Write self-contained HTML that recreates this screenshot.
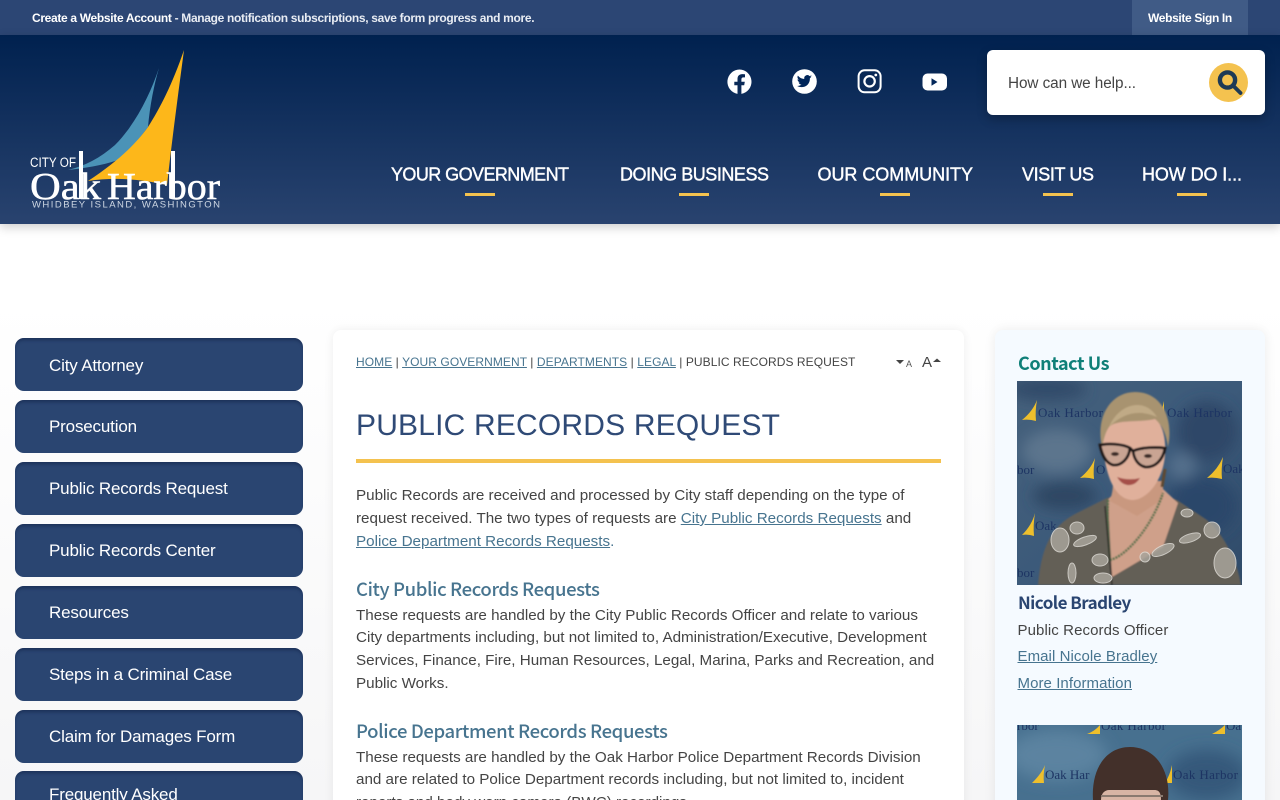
<!DOCTYPE html>
<html lang="en"><head><meta charset="utf-8"><title>Public Records Request</title>
<style>
html,body{margin:0;padding:0;width:1280px;height:800px;overflow:hidden;background:#fff;font-family:"Liberation Sans",sans-serif}
#p{position:relative;width:1280px;height:800px;overflow:hidden;background:linear-gradient(#fff 0,#fff 300px,#f6f6f7 800px)}
.t{position:absolute;white-space:nowrap;line-height:20px}
a{color:#47748f;text-decoration:underline}
#top{position:absolute;left:0;top:0;width:1280px;height:35px;background:#2c4674}
#sign{position:absolute;left:1132px;top:0;width:116px;height:35px;background:#405b86}
#hd{position:absolute;left:0;top:35px;width:1280px;height:189px;background:linear-gradient(#00214f,#29436f);box-shadow:0 3px 10px rgba(0,0,0,.2)}
.u{position:absolute;top:193px;height:3px;width:30px;background:#f4c24f}
#search{position:absolute;left:987px;top:50px;width:278px;height:65px;background:#fff;border-radius:6px;box-shadow:0 4px 10px rgba(0,0,0,.25)}
.b{position:absolute;left:15px;width:288px;height:53px;border-radius:9px;background:#2a4571;box-shadow:inset 0 3px 3px -1px rgba(10,25,60,.45)}
.b span{position:absolute;left:34px;top:17px;line-height:20px;color:#fff;font-size:17px;letter-spacing:-.17px;white-space:nowrap}
#main{position:absolute;left:333px;top:330px;width:631px;height:520px;background:#fff;border-radius:8px;box-shadow:0 0 10px rgba(0,0,0,.07)}
#side{position:absolute;left:995px;top:330px;width:270px;height:520px;background:#f5faff;border-radius:8px;box-shadow:0 0 12px rgba(0,0,0,.08)}
.p{color:#444;font-size:15.2px}
.h{font-family:"Noto Sans CJK SC","Liberation Sans",sans-serif;font-weight:500;font-size:18.5px;letter-spacing:-.37px;color:#47748f;line-height:24px}
.bc{font-size:12px;color:#444;top:352px;letter-spacing:.07px}
</style></head><body><div id="p">
<div id="top"></div><div id="sign"></div>
<div class="t" style="left:32px;top:8px;color:#fff;font-size:12px;letter-spacing:-.325px"><b>Create a Website Account</b> <b style="color:#e8ecf3">- Manage notification subscriptions, save form progress and more.</b></div>
<div class="t" style="left:1148px;top:8px;color:#fff;font-size:12px;font-weight:bold;letter-spacing:-.35px">Website Sign In</div>
<div id="hd"></div>

<svg style="position:absolute;left:0;top:35px" width="240" height="189" viewBox="0 35 240 189">
<path d="M159 68C150 95 135 125 115 145C100 158 85 166 68 170C85 168 100 166 118 160C130 150 140 138 148 127C150 105 154 85 159 68Z" fill="#4b93b7"/>
<path d="M184 50C172 85 160 108 148 127C135 145 117 162 88 181C115 177 140 179 167 185C172 140 178 95 184 50Z" fill="#fdb71a"/>
<rect x="79" y="151" width="4" height="48" fill="#fff"/><rect x="171" y="151" width="4" height="48" fill="#fff"/>
<text x="30" y="167" font-family="Liberation Sans" font-size="13.500" fill="#fff" textLength="46" lengthAdjust="spacingAndGlyphs">CITY OF</text>
<g font-family="Liberation Serif" font-size="38" fill="#fff" stroke="#fff" stroke-width=".5">
<text x="30" y="199" textLength="71" lengthAdjust="spacingAndGlyphs">Oak</text>
<text x="107" y="199" textLength="113" lengthAdjust="spacingAndGlyphs">Harbor</text></g>
<text x="32" y="207.500" font-family="Liberation Sans" font-size="9.500" fill="#cfd8e4" textLength="188">WHIDBEY ISLAND, WASHINGTON</text>
</svg>

<svg style="position:absolute;left:725px;top:66px" width="230" height="32" viewBox="725 66 230 32">
<path d="M739.500 69.500a12.300 12.300 0 0 0-2 24.400v-8.600h-3.200v-3.600h3.200v-2.800c0-3.100 1.900-4.800 4.700-4.800 1.400 0 2.800.2 2.800.2v3.100h-1.600c-1.500 0-2 1-2 2v2.300h3.400l-.6 3.600h-2.800v8.600a12.300 12.300 0 0 0-1.900-24.400z" fill="#fff"/>
<circle cx="804.500" cy="81.500" r="12.300" fill="#fff"/>
<path d="M812 76.500c-.6.300-1.200.4-1.800.5.700-.4 1.100-1 1.400-1.700-.6.400-1.300.6-2 .8a3.100 3.100 0 0 0-5.300 2.800c-2.600-.1-4.900-1.400-6.400-3.300-.8 1.400-.4 3.200 1 4.100-.5 0-1-.1-1.400-.4 0 1.500 1.100 2.800 2.500 3.100-.5.100-.9.100-1.400.1.400 1.200 1.500 2.100 2.900 2.100a6.300 6.300 0 0 1-4.600 1.300c5.700 3.300 13.300-.1 13-7.700.6-.5 1.200-1.100 1.600-1.700z" fill="#00265a"/>
<rect x="858.600" y="70.300" width="22" height="22" rx="6" fill="none" stroke="#fff" stroke-width="2"/>
<circle cx="869.600" cy="81.300" r="5.200" fill="none" stroke="#fff" stroke-width="2.200"/><circle cx="875.800" cy="75" r="1.400" fill="#fff"/>
<rect x="922.500" y="73.500" width="24.500" height="17" rx="5" fill="#fff"/><path d="M931.500 78.300v7.400l6-3.700z" fill="#03275a"/>
</svg>

<div id="search"></div>
<div class="t" style="left:1008px;top:74px;font-size:15.300px;color:#444;letter-spacing:-.07px">How can we help...</div>
<svg style="position:absolute;left:1205px;top:60px" width="46" height="46" viewBox="0 0 46 46">
<ellipse cx="23.500" cy="22.500" rx="19.500" ry="19.500" fill="#f4c24f"/>
<circle cx="22.500" cy="20" r="7.600" fill="none" stroke="#1e3a55" stroke-width="4.400"/>
<path d="M29 26.500l6.500 6.500" stroke="#1e3a55" stroke-width="3.800" stroke-linecap="round"/></svg>

<svg style="position:absolute;left:0;top:0" width="1280" height="460" viewBox="0 0 1280 460">
<g font-family="Liberation Sans" font-size="18" fill="#fff" stroke="#fff" stroke-width=".4">
<text x="391" y="180.500" textLength="178">YOUR GOVERNMENT</text>
<text x="620" y="180.500" textLength="149">DOING BUSINESS</text>
<text x="817.500" y="180.500" textLength="155.500">OUR COMMUNITY</text>
<text x="1022" y="180.500" textLength="72">VISIT US</text>
<text x="1142" y="180.500" textLength="100">HOW DO I...</text></g>
</svg>
<div class="u" style="left:465px"></div><div class="u" style="left:679px"></div><div class="u" style="left:880px"></div><div class="u" style="left:1043px"></div><div class="u" style="left:1177px"></div>

<div class="b" style="top:338px"><span style="top:17.500px">City Attorney</span></div>
<div class="b" style="top:400px"><span>Prosecution</span></div>
<div class="b" style="top:462px"><span>Public Records Request</span></div>
<div class="b" style="top:524px"><span>Public Records Center</span></div>
<div class="b" style="top:586px"><span>Resources</span></div>
<div class="b" style="top:648px"><span>Steps in a Criminal Case</span></div>
<div class="b" style="top:710px"><span>Claim for Damages Form</span></div>
<div class="b" style="top:771px;height:60px"><span style="top:14px">Frequently Asked</span></div>

<div id="main"></div>
<div class="t bc" style="left:356px"><a href="#">HOME</a> | <a href="#">YOUR GOVERNMENT</a> | <a href="#">DEPARTMENTS</a> | <a href="#">LEGAL</a> | PUBLIC RECORDS REQUEST</div>
<svg style="position:absolute;left:894px;top:352px" width="50" height="20" viewBox="0 0 50 20"><path d="M2 8h8l-4 4z" fill="#444"/><path d="M39 10h8l-4-3.500z" fill="#444"/>
<text x="12" y="15" font-family="Liberation Sans" font-size="9" fill="#555">A</text><text x="28" y="15" font-family="Liberation Sans" font-size="15" fill="#444">A</text></svg>
<svg style="position:absolute;left:350px;top:400px" width="450" height="50" viewBox="350 400 450 50"><text x="356" y="435" font-family="Liberation Sans" font-size="30" fill="#2f4a76" textLength="424">PUBLIC RECORDS REQUEST</text></svg>
<div style="position:absolute;left:356px;top:459px;width:585px;height:4px;background:#f4c24f"></div>

<div class="t p" style="left:356px;top:486px">Public Records are received and processed by City staff depending on the type of</div>
<div class="t p" style="left:356px;top:509px">request received. The two types of requests are <a href="#">City Public Records Requests</a> and</div>
<div class="t p" style="left:356px;top:532px"><a href="#">Police Department Records Requests</a><span style="color:#47748f">.</span></div>

<div class="t h" style="left:356px;top:577px">City Public Records Requests</div>
<div class="t p" style="left:356px;top:606px">These requests are handled by the City Public Records Officer and relate to various</div>
<div class="t p" style="left:356px;top:628px">City departments including, but not limited to, Administration/Executive, Development</div>
<div class="t p" style="left:356px;top:651px">Services, Finance, Fire, Human Resources, Legal, Marina, Parks and Recreation, and</div>
<div class="t p" style="left:356px;top:674px">Public Works.</div>

<div class="t h" style="left:356px;top:719px">Police Department Records Requests</div>
<div class="t p" style="left:356px;top:748px">These requests are handled by the Oak Harbor Police Department Records Division</div>
<div class="t p" style="left:356px;top:770px">and are related to Police Department records including, but not limited to, incident</div>
<div class="t p" style="left:356px;top:793px">reports and body worn camera (BWC) recordings.</div>

<div id="side"></div>
<div class="t h" style="left:1018px;top:351px;color:#0f7f78;font-weight:700;font-size:18px;letter-spacing:-.45px">Contact Us</div>

<svg style="position:absolute;left:1017px;top:381px" width="225" height="204" viewBox="0 0 225 204">
<defs><linearGradient id="bg" x1="0" y1="0" x2="1" y2="1"><stop offset="0" stop-color="#46617c"/><stop offset=".5" stop-color="#3c5a7a"/><stop offset="1" stop-color="#2f4a69"/></linearGradient>
<filter id="bl"><feGaussianBlur stdDeviation="7"/></filter><filter id="sb"><feGaussianBlur stdDeviation=".7"/></filter></defs>
<rect width="225" height="204" fill="url(#bg)"/>
<g filter="url(#bl)"><ellipse cx="40" cy="70" rx="35" ry="22" fill="#5b748d"/><ellipse cx="190" cy="50" rx="30" ry="30" fill="#2f4767"/><ellipse cx="185" cy="125" rx="35" ry="30" fill="#2c476a"/><ellipse cx="48" cy="115" rx="32" ry="14" fill="#2d4764"/><ellipse cx="30" cy="8" rx="40" ry="12" fill="#324c6a"/><ellipse cx="165" cy="85" rx="14" ry="14" fill="#54708c"/></g>
<g fill="#eebf2c"><path d="M5 39Q16 30 20 19Q18 30 19 40Q12 38 5 39Z"/><path d="M63 97Q74 88 78 77Q76 88 77 98Q70 96 63 97Z"/><path d="M190 97Q201 88 206 76Q204 88 205 98Q197 96 190 97Z"/><path d="M5 154Q15 144 18 132Q16 144 17 155Q11 153 5 154Z"/><path d="M141 37Q145 30 147 20V38Z"/></g>
<g font-family="Liberation Serif" font-size="13" fill="#1d3463">
<text x="21" y="36" textLength="65">Oak Harbor</text><text x="150" y="36" textLength="65">Oak Harbor</text>
<text x="79" y="93">O</text><text x="206" y="92">Oak</text><text x="0" y="93">bor</text><text x="18" y="149">Oak</text><text x="0" y="196">bor</text></g>
<g filter="url(#sb)">
<path d="M21 204C24 170 32 146 60 132L90 117L112 112L140 112L160 119L190 139C208 155 220 180 224 204Z" fill="#645f56"/>
<path d="M91 119L95 196L146 166L161 122L146 108H100Z" fill="#cfa08a"/>
<path d="M93 120C96 110 96 105 96 100H146V118L120 135Z" fill="#c9987f"/>
<path d="M86 62C84 42 96 30 118 30C138 30 150 44 148 74C146 100 130 119 115 119C98 118 88 95 86 62Z" fill="#e0b09b"/>
<path d="M85 66C78 34 95 11 118 11C144 11 157 36 151 66C149 52 145 44 138 38C120 42 100 38 92 46C88 52 87 58 85 66Z" fill="#a8936f"/>
<path d="M92 46C102 22 128 16 140 36C122 28 106 32 92 46Z" fill="#c0aa86"/>
<path d="M83 64C92 62 106 63 113 67C112 78 104 85 96 84C89 82 85 74 83 64ZM116 70C125 66 139 66 148 67C146 79 138 87 128 86C121 84 117 78 116 70Z" fill="#c9a493" stroke="#1c1518" stroke-width="2.800"/>
<ellipse cx="98" cy="73" rx="4" ry="2" fill="#3a2c28"/><ellipse cx="131" cy="75" rx="4" ry="2" fill="#3a2c28"/>
<path d="M113 67L116 70" stroke="#1c1518" stroke-width="3"/>
<path d="M100 96Q112 100 123 97Q118 105 110 104Q104 103 100 96Z" fill="#a5504a"/>
<path d="M148 88L145 106" stroke="#5e4a30" stroke-width="3"/>
<path d="M91 119C90 145 92 170 93 179C110 175 135 145 146 112" fill="none" stroke="#4f6f4a" stroke-width="2.500" stroke-dasharray="2 1"/>
<path d="M88 125L95 204" stroke="#2d2a27" stroke-width="1.500" fill="none"/>
</g>
<g fill="#a8a49b" stroke="#dedbd5" stroke-width="1" opacity=".85">
<ellipse cx="43" cy="159" rx="9" ry="12"/><ellipse cx="60" cy="147" rx="7" ry="6"/><ellipse cx="68" cy="160" rx="12" ry="4" transform="rotate(-20 68 160)"/><ellipse cx="83" cy="179" rx="8" ry="6"/><ellipse cx="128" cy="176" rx="5" ry="5"/><ellipse cx="146" cy="169" rx="12" ry="4.500" transform="rotate(-25 146 169)"/><ellipse cx="173" cy="157" rx="11" ry="4" transform="rotate(-18 173 157)"/><ellipse cx="195" cy="149" rx="8" ry="8"/><ellipse cx="208" cy="182" rx="11" ry="15"/><ellipse cx="170" cy="132" rx="6" ry="4"/><ellipse cx="86" cy="197" rx="9" ry="5"/><ellipse cx="55" cy="192" rx="4" ry="10"/>
</g>
</svg>

<div class="t h" style="left:1018px;top:590px;color:#2a4571;font-weight:700;font-size:17px;letter-spacing:-.55px">Nicole Bradley</div>
<div class="t" style="left:1017.500px;top:620.500px;font-size:15px;color:#444;letter-spacing:.09px">Public Records Officer</div>
<div class="t" style="left:1017.500px;top:647px;font-size:15px;letter-spacing:.07px"><a href="#">Email Nicole Bradley</a></div>
<div class="t" style="left:1017.500px;top:674px;font-size:15px;letter-spacing:.07px"><a href="#">More Information</a></div>

<svg style="position:absolute;left:1017px;top:725px" width="225" height="75" viewBox="0 0 225 75">
<defs><filter id="bm"><feGaussianBlur stdDeviation="8"/></filter></defs>
<rect width="225" height="75" fill="#47708f"/>
<g filter="url(#bm)"><ellipse cx="40" cy="30" rx="50" ry="25" fill="#5b83a0"/><ellipse cx="190" cy="50" rx="40" ry="25" fill="#36597a"/></g>
<g fill="#eebf2c"><path d="M70 9Q78 6 83 0V9Z"/><path d="M15 58Q25 48 28 40Q26 50 27 58Z"/><path d="M148 58Q153 50 155 40V58Z"/><path d="M195 9Q203 5 208 0V9Z"/></g>
<g font-family="Liberation Serif" font-size="13" fill="#1d3463">
<text x="84" y="5" textLength="65">Oak Harbor</text><text x="0" y="5">rbor</text><text x="209" y="5">Oa</text>
<text x="28" y="54">Oak Har</text><text x="156" y="54" textLength="65">Oak Harbor</text></g>
<path d="M76 75C74 45 88 22 113 22C138 22 154 45 151 75Z" fill="#43302a"/>
<path d="M84 75C84 68 88 65 92 65L138 65C142 65 144 68 144 75Z" fill="#d8b5a5"/>
<path d="M84 68C96 60 106 66 114 62C122 66 132 60 146 68L146 50L84 50Z" fill="#43302a"/>
<path d="M84 71H146" stroke="#8a7a70" stroke-width="2"/>
</svg>
</div></body></html>
